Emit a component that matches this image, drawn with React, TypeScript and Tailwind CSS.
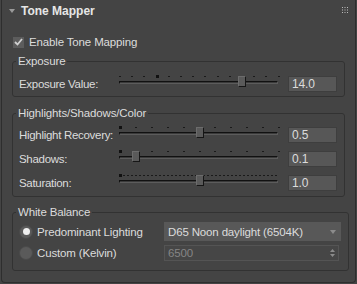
import React from "react"

type Tick = { x: number; big?: boolean }

function ticksEvery(step: number, count: number, bigAt: number[]): Tick[] {
  const out: Tick[] = []
  for (let i = 0; i < count; i++) out.push({ x: Math.round(i * step), big: bigAt.includes(i) })
  return out
}

function Slider({ ticks, handle }: { ticks: Tick[]; handle: number }) {
  return (
    <div className="relative w-[160px] h-[16px] shrink-0">
      {ticks.map((t, i) =>
        t.big ? (
          <div
            key={i}
            className="absolute top-[-1px] w-[3px] h-[3px] bg-[#111]"
            style={{ left: t.x }}
          />
        ) : (
          <div
            key={i}
            className="absolute top-0 w-[2px] h-[1px] bg-[#1a1a1a]"
            style={{ left: t.x }}
          />
        )
      )}
      <div className="absolute left-0 top-[5px] w-[159px] h-[3px] border-t border-l border-[#111] border-b border-r border-b-[#5c5c5c] border-r-[#5c5c5c] bg-[#3a3a3a]" />
      <div
        className="absolute top-0 w-[8px] h-[11px] bg-[#5a5a5a] border border-[#161616] border-t-[#6c6c6c] border-l-[#6c6c6c]"
        style={{ left: handle }}
      />
    </div>
  )
}

function NumBox({ value }: { value: string }) {
  return (
    <div className="ml-auto w-[49px] h-[16px] bg-[#575757] border border-[#3e3e3e] text-[#dcdcdc] pl-[3px] leading-[14px] text-[12px]">
      {value}
    </div>
  )
}

function SliderRow({ label, ticks, handle, value }: { label: string; ticks: Tick[]; handle: number; value: string }) {
  return (
    <div className="flex items-center h-[16px]">
      <div className="w-[106px] shrink-0 pl-[6px] whitespace-nowrap tracking-[-0.3px]">{label}</div>
      <Slider ticks={ticks} handle={handle} />
      <NumBox value={value} />
    </div>
  )
}

function Group({ title, children, className }: { title: string; children: React.ReactNode; className?: string }) {
  return (
    <fieldset className={"mx-[10px] border border-[#323232] rounded-[3px] pr-[7px] " + (className ?? "")}>
      <legend className="ml-[3px] px-[2px] leading-[14px] text-[#dcdcdc]">{title}</legend>
      {children}
    </fieldset>
  )
}

function Radio({ checked }: { checked?: boolean }) {
  return (
    <div className="w-[14px] h-[14px] rounded-full bg-[#5a5a5a] border border-[#4a4a4a] flex items-center justify-center shrink-0">
      {checked && <div className="w-[7px] h-[7px] rounded-full bg-[#eeeeee]" />}
    </div>
  )
}

export default function App() {
  const expTicks = ticksEvery(12.2, 14, [3])
  const hlTicks = ticksEvery(15.9, 11, [0])
  const satTicks = ticksEvery(4, 40, [0])

  return (
    <div
      className="w-[357px] h-[284px] bg-[#444444] text-[11.5px] tracking-[-0.15px] leading-[14px] text-[#dcdcdc] overflow-hidden"
      style={{ fontFamily: '"Liberation Sans", Arial, sans-serif' }}
    >
      <div className="mx-[1px] h-[283px] border border-t-0 border-[#2e2e2e] rounded-b-[4px]">
        <div className="relative flex items-center h-[22px]">
          <svg width="6" height="4" viewBox="0 0 6 4" className="ml-[7px] mt-[-1px]">
            <polygon points="0,0 6,0 3,4" fill="#9a9a9a" />
          </svg>
          <span className="ml-[6px] text-[12px] tracking-normal font-bold text-[#e6e6e6]">Tone Mapper</span>
          <svg width="6" height="6" viewBox="0 0 6 6" className="absolute right-[7px] top-[7px]">
            {[0, 2.5, 5].map((x) =>
              [0, 2.5, 5].map((y) => <rect key={x + "-" + y} x={x} y={y} width="1" height="1" fill="#bdbdbd" />)
            )}
          </svg>
        </div>

        <div className="flex items-center mt-[12px] ml-[11px] h-[16px]">
          <div className="w-[11px] h-[11px] bg-[#5c5c5c] flex items-center justify-center">
            <svg width="9" height="8" viewBox="0 0 9 8">
              <polyline points="1,4 3.5,6.5 8,1" fill="none" stroke="#d0d0d0" strokeWidth="1.8" />
            </svg>
          </div>
          <span className="ml-[5px]">Enable Tone Mapping</span>
        </div>

        <Group title="Exposure" className="mt-[4px] pt-[8px] pb-[4px]">
          <SliderRow label="Exposure Value:" ticks={expTicks} handle={119} value="14.0" />
        </Group>

        <Group title="Highlights/Shadows/Color" className="mt-[9px] pt-[7px] pb-[5px]">
          <div className="flex flex-col gap-[8px]">
            <SliderRow label="Highlight Recovery:" ticks={hlTicks} handle={77} value="0.5" />
            <SliderRow label="Shadows:" ticks={hlTicks} handle={13} value="0.1" />
            <SliderRow label="Saturation:" ticks={satTicks} handle={77} value="1.0" />
          </div>
        </Group>

        <Group title="White Balance" className="mt-[8px] pt-[3px] pb-[9px]">
          <div className="flex items-center h-[19px]">
            <div className="w-[151px] shrink-0 pl-[6px] flex items-center">
              <Radio checked />
              <span className="ml-[4px]">Predominant Lighting</span>
            </div>
            <div className="w-[177px] h-[19px] bg-[#585858] flex items-center pl-[4px] pr-[5px]">
              <span>D65 Noon daylight (6504K)</span>
              <svg width="6" height="4" viewBox="0 0 6 4" className="ml-auto">
                <polygon points="0,0 6,0 3,4" fill="#8c8c8c" />
              </svg>
            </div>
          </div>
          <div className="flex items-center h-[16px] mt-[4px]">
            <div className="w-[151px] shrink-0 pl-[6px] flex items-center">
              <Radio />
              <span className="ml-[4px]">Custom (Kelvin)</span>
            </div>
            <div className="w-[175px] h-[16px] bg-[#464646] border border-[#545454] flex items-center pl-[3px] pr-[3px] text-[#858585]">
              <span>6500</span>
              <svg width="5" height="8" viewBox="0 0 5 8" className="ml-auto">
                <polygon points="0,3 5,3 2.5,0" fill="#8c8c8c" />
                <polygon points="0,5 5,5 2.5,8" fill="#8c8c8c" />
              </svg>
            </div>
          </div>
        </Group>
      </div>
    </div>
  )
}
